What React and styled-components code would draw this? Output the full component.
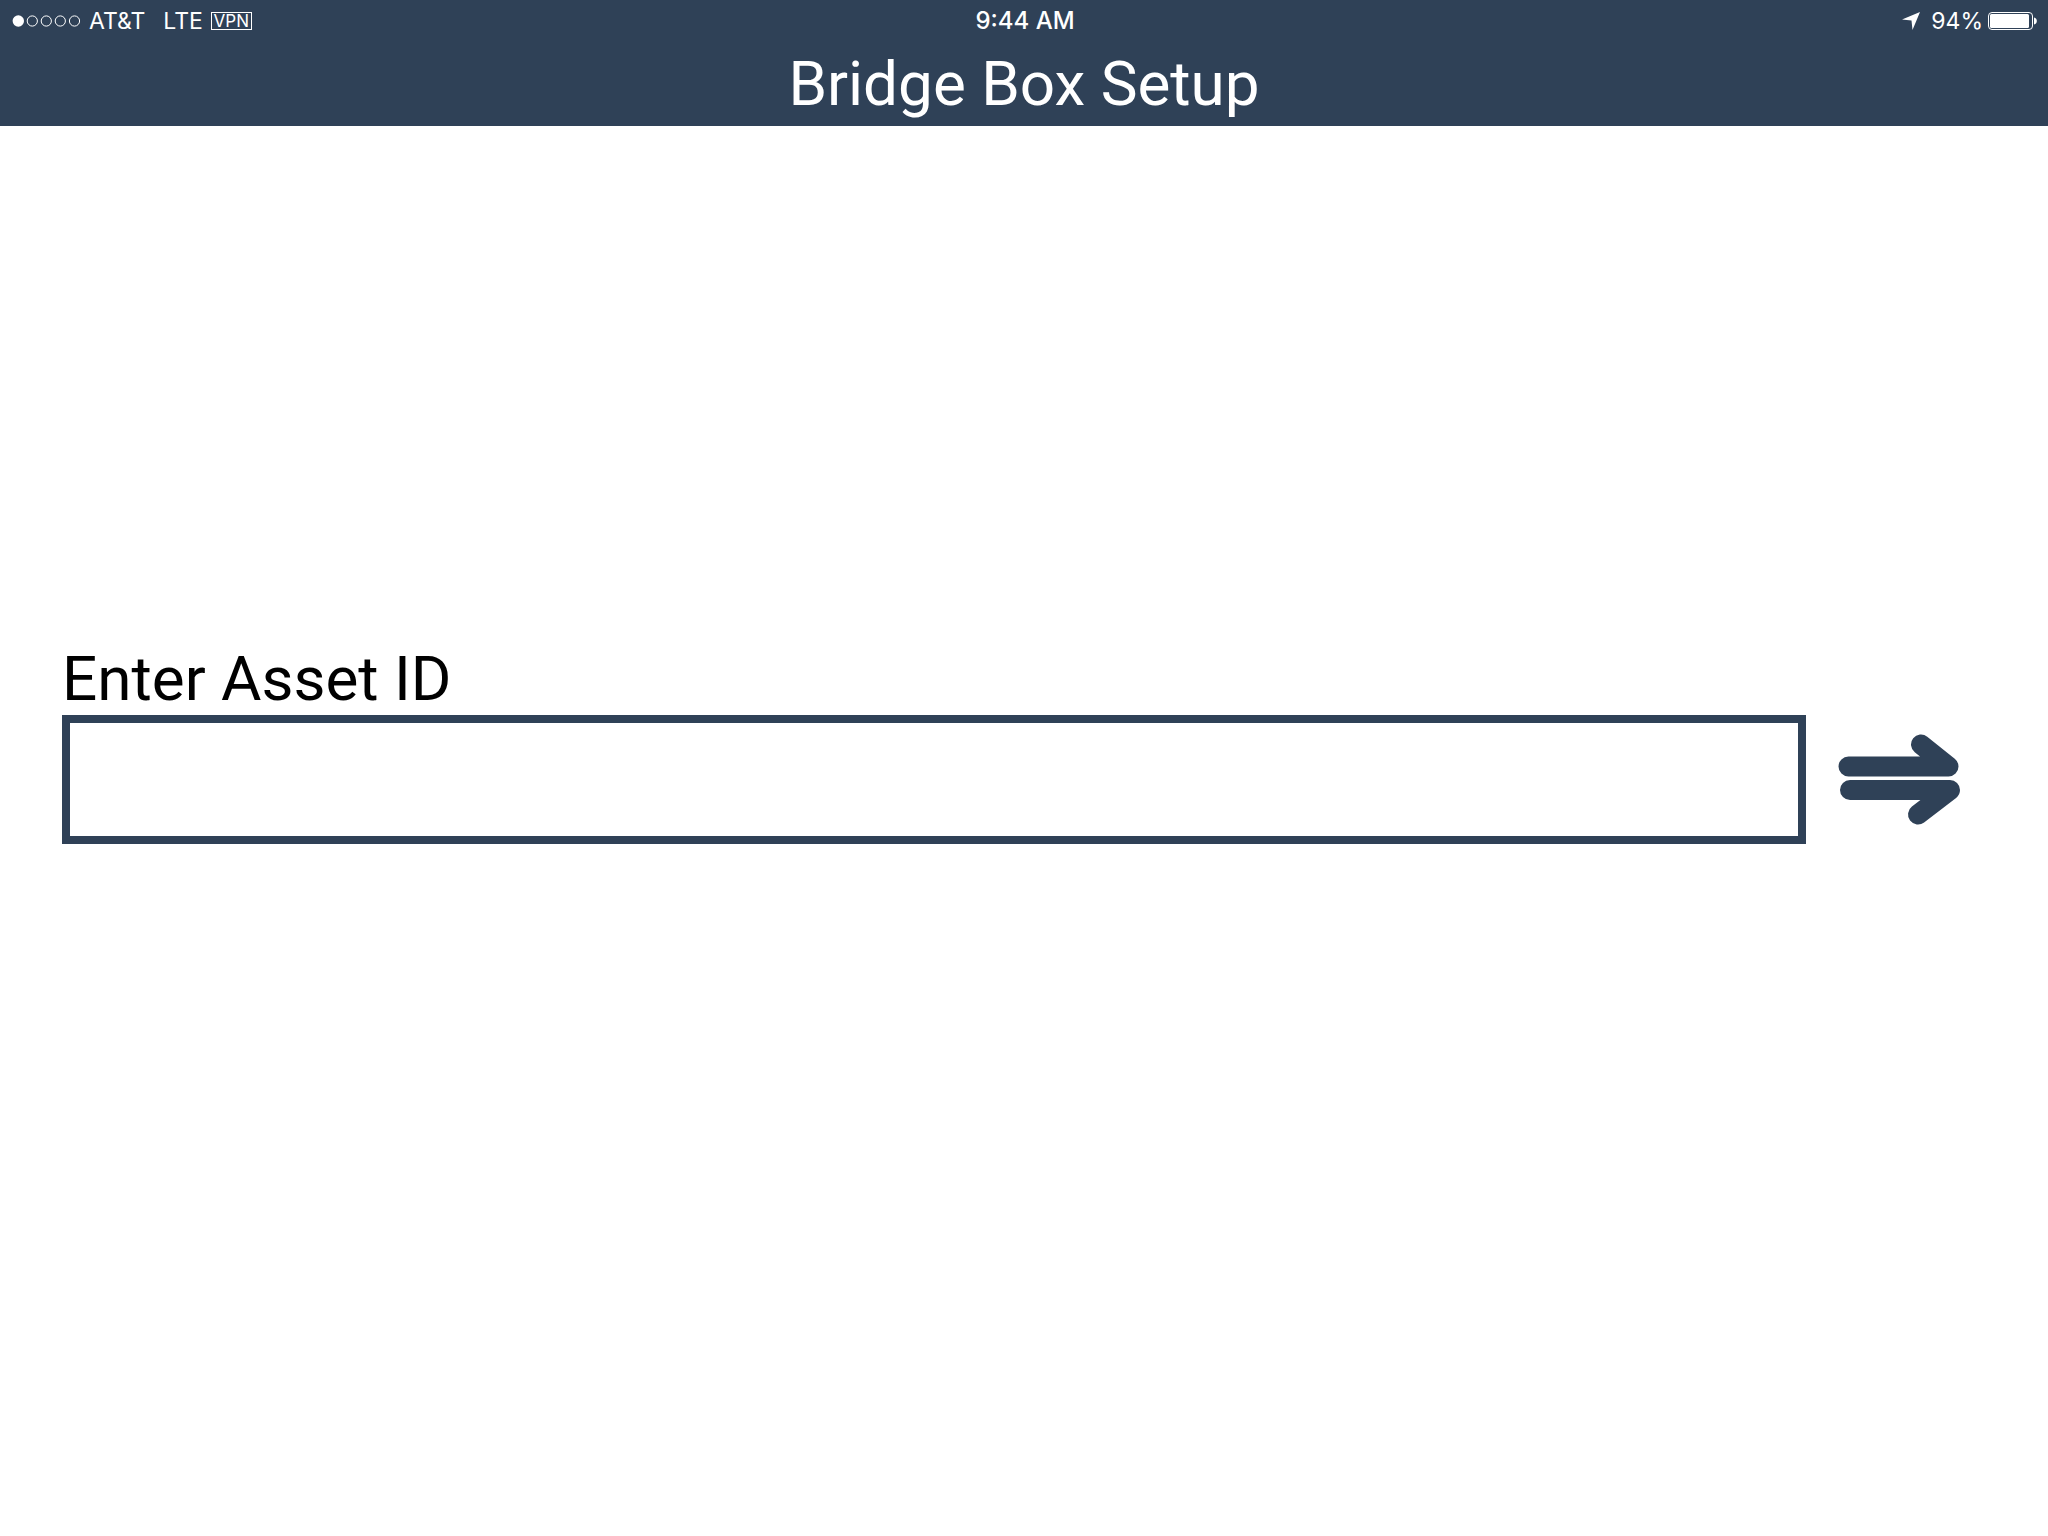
import React from "react";
import styled, { createGlobalStyle } from "styled-components";

const navy = "#2f4157";

const GlobalStyle = createGlobalStyle`
  *, *::before, *::after { box-sizing: border-box; }
  body {
    margin: 0;
    background: #fff;
    color: #000;
    font-family: Inter, "Liberation Sans", sans-serif;
  }
`;

const Header = styled.header`
  background: ${navy};
  color: #fff;
`;

const StatusBar = styled.div`
  display: grid;
  grid-template-columns: 1fr auto 1fr;
  align-items: center;
  height: 42px;
  padding: 0 10px 0 12px;
  font-size: 23px;
  line-height: 42px;
`;

const StatusGroup = styled.div`
  display: flex;
  align-items: center;
  justify-content: ${(p) => (p.$end ? "flex-end" : "flex-start")};
  gap: ${(p) => p.$gap}px;
`;

const Signal = styled.svg`
  display: block;
  width: 69px;
  height: 12px;
`;

const Carrier = styled.span`
  margin-right: 10px;
`;

const Clock = styled.time`
  font-size: 24px;
  font-weight: 500;
`;

const Vpn = styled.span`
  display: flex;
  align-items: center;
  justify-content: center;
  width: 41px;
  height: 18px;
  border: 1px solid #fff;
  font-size: 17px;
  line-height: 16px;
`;

const LocationIcon = styled.svg`
  display: block;
  width: 18px;
  height: 18px;
  margin-right: 6px;
`;

const BatteryIcon = styled.svg`
  display: block;
  width: 50px;
  height: 20px;
`;

const Title = styled.h1`
  margin: 0;
  font-family: Roboto, "Liberation Sans", sans-serif;
  font-size: 62px;
  font-weight: 400;
  line-height: 84px;
  text-align: center;
`;

const Main = styled.main`
  padding: 517px 82px 0 62px;
`;

const AssetForm = styled.form`
  display: grid;
  grid-template-columns: 1fr auto;
  column-gap: 26px;
  align-items: center;
`;

const Label = styled.label`
  grid-column: 1 / -1;
  font-family: Roboto, "Liberation Sans", sans-serif;
  font-size: 62px;
  line-height: 72px;
`;

const AssetInput = styled.input`
  width: 100%;
  height: 129px;
  padding: 0 24px;
  border: 8px solid ${navy};
  border-radius: 0;
  background: #fff;
  color: #000;
  font-family: Roboto, "Liberation Sans", sans-serif;
  font-size: 62px;
  outline: none;
`;

const SubmitButton = styled.button`
  padding: 0;
  border: 0;
  background: none;
  cursor: pointer;
`;

const ArrowIcon = styled.svg`
  display: block;
  width: 134px;
  height: 101px;
`;

function SignalDots() {
  return (
    <Signal viewBox="0 0 69 12" aria-hidden="true">
      <circle cx="6.3" cy="6" r="5.7" fill="#fff" />
      {[20.3, 34.3, 48.3, 62.5].map((cx) => (
        <circle key={cx} cx={cx} cy="6" r="5.1" fill="none" stroke="#fff" />
      ))}
    </Signal>
  );
}

function Battery() {
  return (
    <BatteryIcon viewBox="0 0 50 20" aria-hidden="true">
      <rect x="0.5" y="1.5" width="44" height="17" rx="3.5" fill="none" stroke="#fff" />
      <rect x="2" y="3" width="39" height="14" rx="1.5" fill="#fff" />
      <path d="M46 6.5c2 .4 2.8 1.7 2.8 3.5s-.8 3.100-2.800 3.500z" fill="#fff" />
    </BatteryIcon>
  );
}

function DoubleArrow() {
  return (
    <ArrowIcon viewBox="0 0 134 101" aria-hidden="true">
      <g
        fill="none"
        stroke={navy}
        strokeWidth="20"
        strokeLinecap="round"
        strokeLinejoin="round"
      >
        <path d="M16.500 37.500H116.500L89 15.500" />
        <path d="M18 61H118L86 85.500" />
      </g>
    </ArrowIcon>
  );
}

export default function App() {
  return (
    <>
      <GlobalStyle />
      <Header>
        <StatusBar>
          <StatusGroup $gap={8}>
            <SignalDots />
            <Carrier>AT&amp;T</Carrier>
            <span>LTE</span>
            <Vpn>VPN</Vpn>
          </StatusGroup>
          <Clock>9:44 AM</Clock>
          <StatusGroup $gap={5} $end>
            <LocationIcon viewBox="0 0 18 18" aria-hidden="true">
              <path d="M18 0L10.500 18L9.500 8.500L0 7.500z" fill="#fff" />
            </LocationIcon>
            <span>94%</span>
            <Battery />
          </StatusGroup>
        </StatusBar>
        <Title>Bridge Box Setup</Title>
      </Header>
      <Main>
        <AssetForm onSubmit={(event) => event.preventDefault()}>
          <Label htmlFor="asset-id">Enter Asset ID</Label>
          <AssetInput id="asset-id" type="text" autoComplete="off" />
          <SubmitButton type="submit" aria-label="Continue">
            <DoubleArrow />
          </SubmitButton>
        </AssetForm>
      </Main>
    </>
  );
}
